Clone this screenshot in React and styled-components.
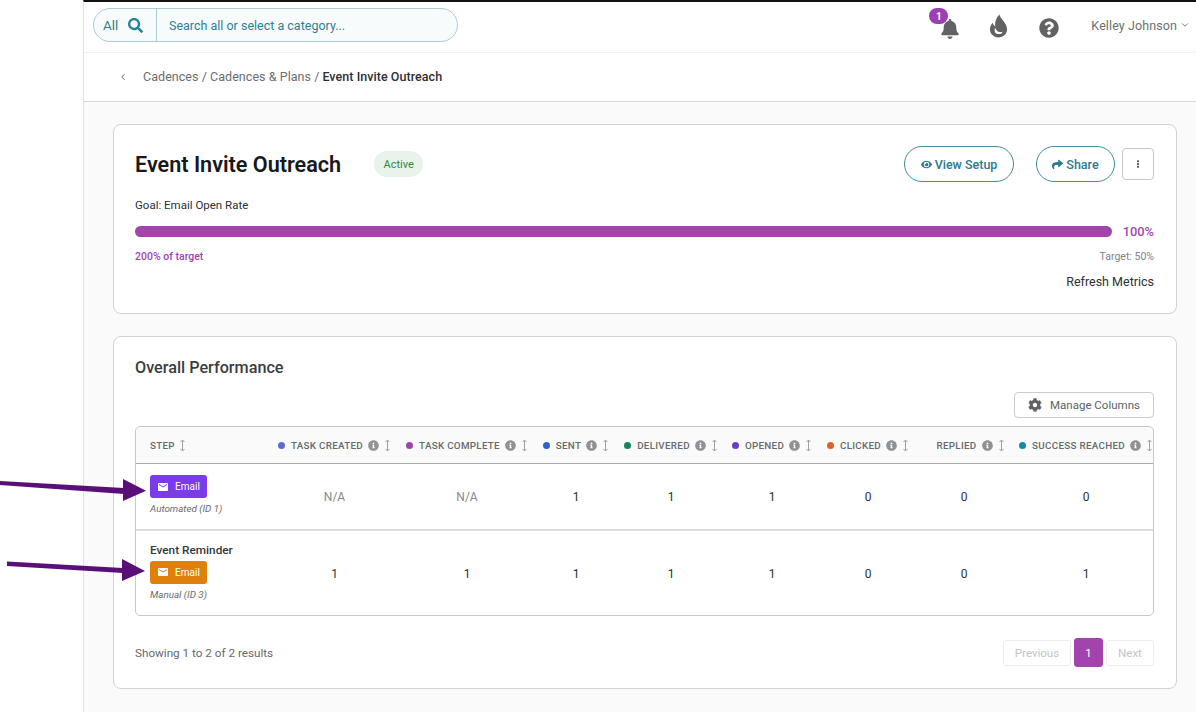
import React from 'react';
import styled, { createGlobalStyle } from 'styled-components';
import { FaBell, FaCog, FaEllipsisV, FaEye, FaInfoCircle, FaQuestionCircle, FaSearch, FaShare } from 'react-icons/fa';
import { MdEmail } from 'react-icons/md';
import { LuChevronDown, LuChevronLeft } from 'react-icons/lu';

const GlobalStyle = createGlobalStyle`
  html, body {
    margin: 0;
    height: 712px;
    overflow: hidden;
    background: #fff;
    font-family: Roboto, "Liberation Sans", sans-serif;
    color: #22252a;
  }
  * { box-sizing: border-box; }
`;

const Page = styled.div`
  position: relative;
  width: 1196px;
  height: 712px;
  padding-left: 83px;
`;

const Main = styled.div`
  height: 712px;
  border-left: 1px solid #dfe3e6;
  border-top: 2px solid #111;
  background: #fafafa;
`;

const TopBar = styled.header`
  height: 51px;
  display: flex;
  align-items: center;
  padding: 0 6px 4px 9px;
  background: #fff;
  border-bottom: 1px solid #f1f2f2;
`;

const SearchBox = styled.div`
  width: 365px;
  height: 34px;
  display: flex;
  border: 1px solid #a9cdd6;
  border-radius: 18px;
  background: #f8fbfc;
  color: #2f7f92;
  font-size: 12.5px;
`;

const SearchScope = styled.div`
  width: 63px;
  display: flex;
  align-items: center;
  gap: 10px;
  padding-left: 9px;
  border-right: 1px solid #a9cdd6;
  font-size: 13.5px;
  svg { font-size: 15px; color: #1f8496; }
`;

const SearchText = styled.div`
  display: flex;
  align-items: center;
  padding-left: 12px;
`;

const TopIcons = styled.div`
  margin-left: auto;
  display: flex;
  align-items: center;
  color: #606264;
`;

const IconSlot = styled.div`
  position: relative;
  display: flex;
  top: ${(p) => p.$drop}px;
  font-size: ${(p) => p.$size}px;
  margin-right: ${(p) => p.$gap}px;
`;

const Badge = styled.span`
  position: absolute;
  left: -11px;
  top: -11px;
  width: 19px;
  height: 16px;
  border-radius: 8px;
  background: #9c3fb3;
  color: #fff;
  font-size: 10px;
  font-weight: 700;
  display: flex;
  align-items: center;
  justify-content: center;
`;

const UserName = styled.div`
  display: flex;
  align-items: center;
  gap: 3px;
  font-size: 12.5px;
  letter-spacing: 0.1px;
  color: #6c6f72;
  svg { font-size: 10px; }
`;

const Crumbs = styled.nav`
  height: 49px;
  display: flex;
  align-items: center;
  padding: 0 0 1px 34px;
  background: #fff;
  border-bottom: 1px solid #d5dadd;
  font-size: 12.5px;
  letter-spacing: 0.05px;
  color: #6a6d70;
  svg { font-size: 10px; margin-right: 15px; color: #444; }
  strong { font-weight: 500; color: #2c2f33; margin-left: 3px; }
`;

const Content = styled.main`
  display: flex;
  flex-direction: column;
  gap: 22px;
  padding: 22px 19px 0 29px;
`;

const Card = styled.section`
  background: #fff;
  border: 1px solid #cfd3d6;
  border-radius: 8px;
  padding: 0 22px 0 21px;
  height: ${(p) => p.$height}px;
`;

const TitleRow = styled.div`
  display: flex;
  align-items: center;
  padding-top: 21px;
  height: 57px;
`;

const Title = styled.h1`
  margin: 0;
  font-size: 21.6px;
  font-weight: 600;
  color: #15181c;
`;

const Status = styled.span`
  margin-left: 33px;
  width: 49px;
  height: 26px;
  border-radius: 13px;
  background: #e8f3e9;
  color: #2f8a45;
  font-size: 11px;
  display: flex;
  align-items: center;
  justify-content: center;
`;

const Actions = styled.div`
  margin-left: auto;
  display: flex;
  align-items: center;
`;

const PillButton = styled.button`
  width: ${(p) => p.$width}px;
  height: 36px;
  margin-right: ${(p) => p.$gap}px;
  display: flex;
  align-items: center;
  justify-content: center;
  gap: 3px;
  background: #fff;
  border: 1px solid #3f8c9e;
  border-radius: 18px;
  color: #2a7b8e;
  font: 500 12.5px Roboto, sans-serif;
  svg { font-size: 11px; }
`;

const MoreButton = styled.button`
  width: 32px;
  height: 32px;
  display: flex;
  align-items: center;
  justify-content: center;
  background: #fff;
  border: 1px solid #c4c7ca;
  border-radius: 4px;
  color: #555;
  font-size: 8px;
`;

const Goal = styled.div`
  margin-top: 16px;
  font-size: 11.5px;
  line-height: 14px;
  color: #2c2f33;
`;

const ProgressRow = styled.div`
  margin-top: 11px;
  display: flex;
  align-items: center;
  justify-content: space-between;
  height: 16px;
`;

const ProgressBar = styled.div`
  width: 977px;
  height: 11px;
  border-radius: 6px;
  background: #a344ad;
`;

const Percent = styled.span`
  font-size: 12.8px;
  font-weight: 500;
  color: #a344ad;
`;

const TargetRow = styled.div`
  margin-top: 11px;
  display: flex;
  justify-content: space-between;
  align-items: center;
  font-size: 10.5px;
  line-height: 14px;
  color: #80848a;
  b { font-weight: 500; color: #a344ad; }
`;

const Refresh = styled.div`
  margin-top: 10px;
  text-align: right;
  font-size: 12.5px;
  line-height: 15px;
  color: #2c2f33;
`;

const SectionTitle = styled.h2`
  margin: 0;
  padding-top: 21px;
  font-size: 16.2px;
  line-height: 19px;
  font-weight: 500;
  color: #3a3d41;
`;

const ToolRow = styled.div`
  margin-top: 15px;
  display: flex;
  justify-content: flex-end;
`;

const ColumnsButton = styled.button`
  width: 140px;
  height: 26px;
  display: flex;
  align-items: center;
  justify-content: center;
  gap: 8px;
  background: #fff;
  border: 1px solid #c9cccf;
  border-radius: 4px;
  color: #5c5f63;
  font: 400 11.5px Roboto, sans-serif;
  svg { font-size: 14px; color: #606366; }
`;

const Table = styled.div`
  margin-top: 8px;
  border: 1px solid #c6c9cc;
  border-radius: 5px;
  height: 190px;
`;

const Row = styled.div`
  display: grid;
  grid-template-columns: 134px 129px 136px 82px 108px 94px 98px 94px 150px;
  align-items: center;
  height: ${(p) => p.$height}px;
  border-bottom: ${(p) => p.$line};
`;

const Head = styled(Row)`
  background: #fafafa;
  border-radius: 5px 5px 0 0;
`;

const HeadCell = styled.div`
  display: flex;
  align-items: center;
  justify-content: ${(p) => (p.$step ? 'flex-start' : 'center')};
  padding-left: ${(p) => (p.$step ? '14px' : '0')};
  white-space: nowrap;
  font-size: 9.8px;
  font-weight: 500;
  letter-spacing: 0.3px;
  color: #666a6e;
`;

const Dot = styled.i`
  width: 7px;
  height: 7px;
  margin-right: 6px;
  border-radius: 50%;
  background: ${(p) => p.$color};
`;

const Info = styled(FaInfoCircle)`
  margin-left: 5px;
  font-size: 11px;
  color: #8f9295;
`;

const SortIcon = styled.svg`
  margin-left: ${(p) => p.$gap}px;
  width: 7px;
  height: 13px;
  color: #9ea1a4;
`;

const StepCell = styled.div`
  padding: 0 0 3px 14px;
`;

const StepName = styled.div`
  font-size: 11.8px;
  line-height: 13px;
  font-weight: 500;
  margin-bottom: 4px;
  color: #35383c;
`;

const ChannelTag = styled.div`
  width: 57px;
  height: 23px;
  display: flex;
  align-items: center;
  justify-content: center;
  gap: 6px;
  border-radius: 3px;
  background: ${(p) => p.$color};
  color: #fff;
  font-size: 10px;
  svg { font-size: 12px; }
`;

const StepMeta = styled.div`
  margin-top: 5px;
  font-size: 9.8px;
  line-height: 12px;
  font-style: italic;
  color: #686b6f;
`;

const Value = styled.div`
  text-align: center;
  font-size: 12px;
  color: ${(p) => (p.$muted ? '#85888c' : '#2c2f33')};
`;

const Footer = styled.div`
  margin-top: 22px;
  display: flex;
  align-items: center;
  justify-content: space-between;
  font-size: 11.7px;
  color: #65686c;
`;

const Pager = styled.div`
  display: flex;
  align-items: center;
  gap: 3px;
`;

const PageButton = styled.button`
  height: ${(p) => (p.$active ? 29 : 26)}px;
  width: ${(p) => p.$width}px;
  border: 1px solid ${(p) => (p.$active ? '#a344ad' : '#eceded')};
  border-radius: 3px;
  background: ${(p) => (p.$active ? '#a344ad' : '#fff')};
  color: ${(p) => (p.$active ? '#fff' : '#c3c5c7')};
  font: 400 11.5px Roboto, sans-serif;
  padding: 0;
`;

const Arrows = styled.svg`
  position: absolute;
  left: 0;
  top: 465px;
  width: 160px;
  height: 130px;
  pointer-events: none;
`;

const Sort = ({ gap = 4 }) => (
  <SortIcon $gap={gap} viewBox="0 0 7 13">
    <path d="M3.5 1v11M1.5 3l2-2 2 2M1.5 10l2 2 2-2" fill="none" stroke="currentColor" strokeWidth="1" />
  </SortIcon>
);

// the flame in the top bar, with its crescent cut out
const Flame = () => (
  <svg width="19" height="24" viewBox="0 0 20 24" fill="currentColor">
    <path
      fillRule="evenodd"
      d="M11 0C12 5 19 9 19 15.5C19 20.5 15 24 10 24C5 24 1 20.5 1 15.5C1 12.5 2.5 10 4 8.5C4.5 10.5 5 11.5 6.5 12.5C6 8 7.5 3 11 0ZM6.5 14C5 17 6.5 20.5 10 20.5C12.5 20.5 14 19.5 14.5 18C11.5 19 8 18 6.5 14Z"
    />
  </svg>
);

const columns = [
  { label: 'TASK CREATED', color: '#5b6bd1' },
  { label: 'TASK COMPLETE', color: '#9c46a8' },
  { label: 'SENT', color: '#2f62cf' },
  { label: 'DELIVERED', color: '#17855f' },
  { label: 'OPENED', color: '#6b3bc4' },
  { label: 'CLICKED', color: '#d9642a' },
  { label: 'REPLIED', color: 'transparent' },
  { label: 'SUCCESS REACHED', color: '#118aa5' },
];

const steps = [
  { tag: '#7c3aed', meta: 'Automated (ID 1)', values: ['N/A', 'N/A', 1, 1, 1, 0, 0, 0], height: 67, line: '2px solid #dcdddf' },
  { name: 'Event Reminder', tag: '#df7f0c', meta: 'Manual (ID 3)', values: [1, 1, 1, 1, 1, 0, 0, 1], height: 85, line: '0' },
];

export default function App() {
  return (
    <Page>
      <GlobalStyle />
      <Main>
        <TopBar>
          <SearchBox>
            <SearchScope>All <FaSearch /></SearchScope>
            <SearchText>Search all or select a category...</SearchText>
          </SearchBox>
          <TopIcons>
            <IconSlot $size={20} $gap={29} $drop={4}><Badge>1</Badge><FaBell /></IconSlot>
            <IconSlot $size={22} $gap={31} $drop={1}><Flame /></IconSlot>
            <IconSlot $size={20} $gap={32} $drop={3}><FaQuestionCircle /></IconSlot>
            <UserName>Kelley Johnson <LuChevronDown /></UserName>
          </TopIcons>
        </TopBar>
        <Crumbs>
          <LuChevronLeft />
          Cadences / Cadences &amp; Plans / <strong>Event Invite Outreach</strong>
        </Crumbs>
        <Content>
          <Card $height={190}>
            <TitleRow>
              <Title>Event Invite Outreach</Title>
              <Status>Active</Status>
              <Actions>
                <PillButton $width={110} $gap={22}><FaEye /> View Setup</PillButton>
                <PillButton $width={79} $gap={7}><FaShare /> Share</PillButton>
                <MoreButton><FaEllipsisV /></MoreButton>
              </Actions>
            </TitleRow>
            <Goal>Goal: Email Open Rate</Goal>
            <ProgressRow>
              <ProgressBar />
              <Percent>100%</Percent>
            </ProgressRow>
            <TargetRow>
              <b>200% of target</b>
              <span>Target: 50%</span>
            </TargetRow>
            <Refresh>Refresh Metrics</Refresh>
          </Card>
          <Card $height={353}>
            <SectionTitle>Overall Performance</SectionTitle>
            <ToolRow>
              <ColumnsButton><FaCog /> Manage Columns</ColumnsButton>
            </ToolRow>
            <Table>
              <Head $height={37} $line="1px solid #a9acaf">
                <HeadCell $step>STEP <Sort /></HeadCell>
                {columns.map((c) => (
                  <HeadCell key={c.label}>
                    <Dot $color={c.color} />
                    {c.label}
                    <Info />
                    <Sort gap={5} />
                  </HeadCell>
                ))}
              </Head>
              {steps.map((s) => (
                <Row key={s.meta} $height={s.height} $line={s.line}>
                  <StepCell>
                    {s.name && <StepName>{s.name}</StepName>}
                    <ChannelTag $color={s.tag}><MdEmail /> Email</ChannelTag>
                    <StepMeta>{s.meta}</StepMeta>
                  </StepCell>
                  {s.values.map((v, i) => (
                    <Value key={i} $muted={v === 'N/A'}>{v}</Value>
                  ))}
                </Row>
              ))}
            </Table>
            <Footer>
              Showing 1 to 2 of 2 results
              <Pager>
                <PageButton $width={68}>Previous</PageButton>
                <PageButton $width={29} $active>1</PageButton>
                <PageButton $width={48}>Next</PageButton>
              </Pager>
            </Footer>
          </Card>
        </Content>
      </Main>
      <Arrows viewBox="0 0 160 130">
        <g fill="#5a0f78" stroke="none">
          <path d="M0 16L124 23V29L0 20Z" />
          <path d="M123 14L146 25.7L123 36Z" />
          <path d="M7 96.5L123 103V108L7 101Z" />
          <path d="M122 94L145 106L122 116Z" />
        </g>
      </Arrows>
    </Page>
  );
}
